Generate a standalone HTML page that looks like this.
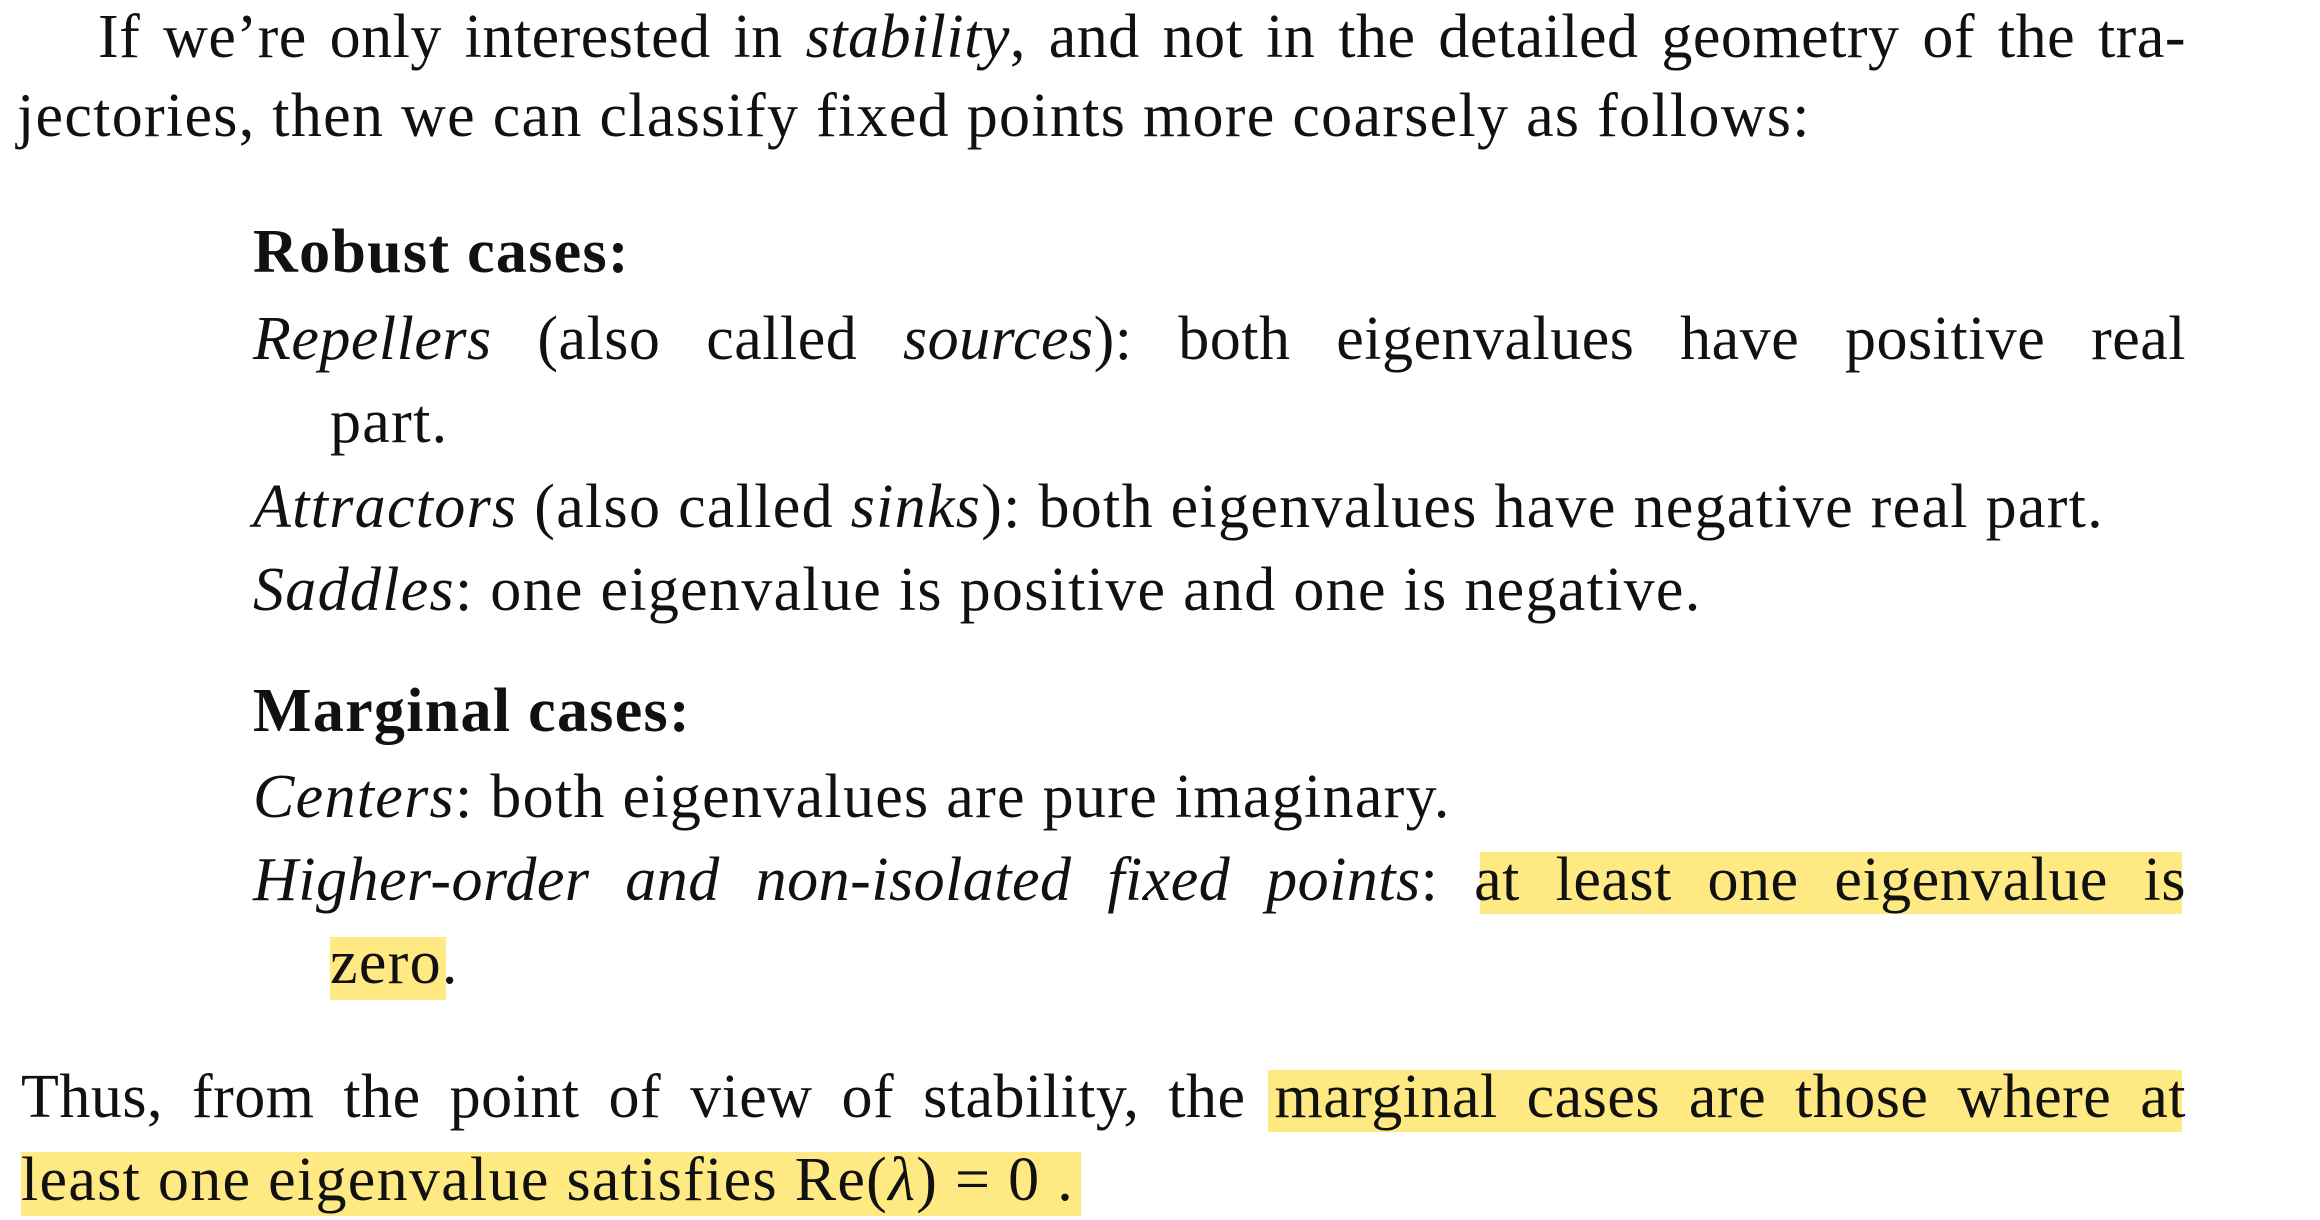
<!DOCTYPE html>
<html><head><meta charset="utf-8"><style>
html,body{margin:0;padding:0;background:#fff;}
body{width:2320px;height:1220px;position:relative;overflow:hidden;font-family:"Liberation Serif","DejaVu Serif",serif;color:#111;}
.l{position:absolute;font-size:62px;line-height:62px;white-space:nowrap;letter-spacing:1.3px;}
.j{text-align:justify;text-align-last:justify;letter-spacing:0.5px;}
.h{position:absolute;background:#ffe982;}
i{font-style:italic;}
b{font-weight:bold;}
</style></head><body>
<div class="h" style="left:1480px;top:852px;width:702px;height:62px"></div>
<div class="h" style="left:330px;top:937px;width:116px;height:63px"></div>
<div class="h" style="left:1268px;top:1070px;width:914px;height:62px"></div>
<div class="h" style="left:21px;top:1152px;width:1060px;height:64px"></div>

<div class="l j" style="left:98px;top:6px;width:2088px">If we’re only interested in <i>stability</i>, and not in the detailed geometry of the tra-</div>
<div class="l" style="left:17px;top:85px">jectories, then we can classify fixed points more coarsely as follows:</div>
<div class="l" style="left:253px;top:221px"><b>Robust cases:</b></div>
<div class="l j" style="left:253px;top:308px;width:1933px"><i>Repellers</i> (also called <i>sources</i>): both eigenvalues have positive real</div>
<div class="l" style="left:330px;top:391px">part.</div>
<div class="l" style="left:253px;top:476px"><i>Attractors</i> (also called <i>sinks</i>): both eigenvalues have negative real part.</div>
<div class="l" style="left:253px;top:559px"><i>Saddles</i>: one eigenvalue is positive and one is negative.</div>
<div class="l" style="left:253px;top:680px"><b>Marginal cases:</b></div>
<div class="l" style="left:253px;top:766px"><i>Centers</i>: both eigenvalues are pure imaginary.</div>
<div class="l j" style="left:253px;top:849px;width:1933px"><i>Higher-order and non-isolated fixed points</i>: at least one eigenvalue is</div>
<div class="l" style="left:330px;top:932px">zero.</div>
<div class="l j" style="left:21px;top:1066px;width:2165px">Thus, from the point of view of stability, the marginal cases are those where at</div>
<div class="l" style="left:21px;top:1149px">least one eigenvalue satisfies Re(<i>λ</i>) = 0 .</div>
</body></html>
